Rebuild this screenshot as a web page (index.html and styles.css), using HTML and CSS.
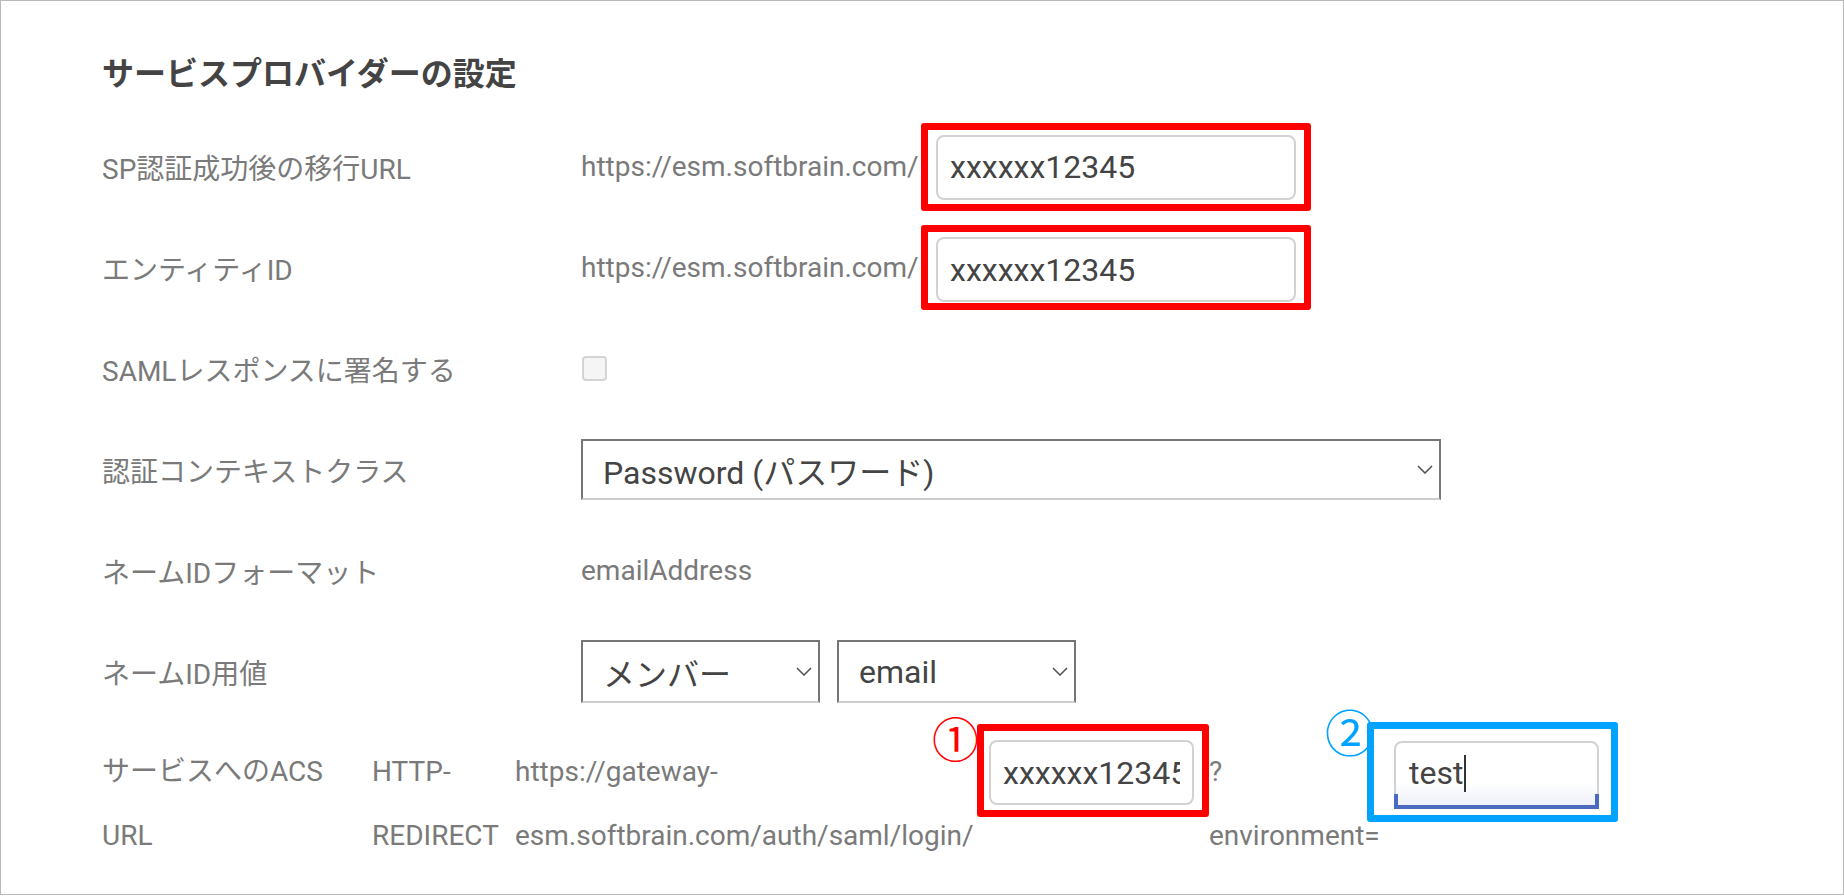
FILE: index.html
```html
<!DOCTYPE html>
<html lang="ja">
<head>
<meta charset="utf-8">
<title>サービスプロバイダーの設定</title>
<link rel="stylesheet" href="styles.css">
</head>
<body>
<div class="panel">
  <h2 class="title">サービスプロバイダーの設定</h2>

  <div class="row">
    <div class="label">SP認証成功後の移行URL</div>
    <div class="field">
      <span class="prefix">https://esm.softbrain.com/</span>
      <div class="mark mark-red mark-wide">
        <input class="text-input" type="text" value="xxxxxx12345" readonly>
      </div>
    </div>
  </div>

  <div class="row">
    <div class="label">エンティティID</div>
    <div class="field">
      <span class="prefix">https://esm.softbrain.com/</span>
      <div class="mark mark-red mark-wide mark-flat">
        <input class="text-input" type="text" value="xxxxxx12345" readonly>
      </div>
    </div>
  </div>

  <div class="row">
    <div class="label">SAMLレスポンスに署名する</div>
    <div class="field">
      <input class="check" type="checkbox">
    </div>
  </div>

  <div class="row">
    <div class="label">認証コンテキストクラス</div>
    <div class="field">
      <div class="select select-long">
        <span>Password (パスワード)</span>
        <svg class="chevron" width="16" height="9" viewBox="0 0 16 9"><polyline points="1,1 8,8 15,1" fill="none" stroke="#555" stroke-width="1.6"/></svg>
      </div>
    </div>
  </div>

  <div class="row">
    <div class="label">ネームIDフォーマット</div>
    <div class="field">
      <span class="value">emailAddress</span>
    </div>
  </div>

  <div class="row">
    <div class="label">ネームID用値</div>
    <div class="field field-gap">
      <div class="select select-short">
        <span>メンバー</span>
        <svg class="chevron" width="16" height="9" viewBox="0 0 16 9"><polyline points="1,1 8,8 15,1" fill="none" stroke="#555" stroke-width="1.6"/></svg>
      </div>
      <div class="select select-short">
        <span>email</span>
        <svg class="chevron" width="16" height="9" viewBox="0 0 16 9"><polyline points="1,1 8,8 15,1" fill="none" stroke="#555" stroke-width="1.6"/></svg>
      </div>
    </div>
  </div>

  <div class="acs">
    <div class="acs-col acs-label">サービスへのACS<br>URL</div>
    <div class="acs-col acs-method">HTTP-<br>REDIRECT</div>
    <div class="acs-col acs-url">https://gateway-<br>esm.softbrain.com/auth/saml/login/</div>
    <div class="mark mark-red mark-acs">
      <span class="badge badge-red">①</span>
      <input class="text-input" type="text" value="xxxxxx12345" readonly>
    </div>
    <div class="acs-col acs-query">?<br>environment=</div>
    <div class="mark mark-blue">
      <span class="badge badge-blue">②</span>
      <div class="text-input focused"><span>test</span><span class="caret"></span></div>
    </div>
  </div>
</div>
</body>
</html>
```

FILE: styles.css
```css
* {
  box-sizing: border-box;
}

html,
body {
  margin: 0;
  background: #fff;
}

body {
  font-family: Roboto, "Noto Sans CJK JP", sans-serif;
  color: #7a7a7a;
}

.panel {
  height: 895px;
  border: 1px solid #b9b9b9;
  padding: 51px 0 0 101px;
}

.title {
  margin: 0 0 20px;
  font-size: 32px;
  line-height: 44px;
  font-weight: 700;
  color: #444;
}

/* form rows */
.row {
  display: flex;
  align-items: center;
  height: 101px;
  font-size: 28px;
}

.label {
  width: 479px;
  flex: none;
}

.field {
  display: flex;
  align-items: center;
}

.field-gap {
  gap: 17px;
}

.prefix {
  width: 340px;
  white-space: nowrap;
}

.value {
  color: #7a7a7a;
}

/* annotation frames around inputs */
.mark {
  position: relative;
  flex: none;
  border-radius: 3px;
}

.mark-red {
  border: 7px solid #ff0000;
}

.mark-blue {
  border: 7px solid #00a3ff;
  width: 251px;
  height: 100px;
  padding: 12px 12px 6px 20px;
}

.mark-wide {
  width: 390px;
  height: 88px;
  padding: 5px 8px 4px 8px;
}

.mark-wide.mark-flat {
  height: 85px;
  padding-bottom: 1px;
}

.mark-acs {
  width: 232px;
  height: 93px;
  margin-top: 2px;
  padding: 9px 8px 4px 5px;
}

.badge {
  position: absolute;
  right: 100%;
  font-family: "Noto Sans CJK JP", sans-serif;
  font-size: 47px;
  line-height: 47px;
}

.badge-red {
  color: #ff0000;
  top: -18px;
  margin-right: 5px;
}

.badge-blue {
  color: #00a3ff;
  top: -24px;
  margin-right: -1px;
  font-size: 50px;
  line-height: 50px;
}

/* text inputs */
.text-input {
  display: block;
  width: 100%;
  height: 65px;
  margin: 0;
  border: 2px solid #d2d2d2;
  border-radius: 8px;
  padding: 0 12px 0 12px;
  font-family: Roboto, "Noto Sans CJK JP", sans-serif;
  font-size: 32px;
  color: #444;
  background: #fff;
  outline: none;
  overflow: hidden;
  white-space: nowrap;
}

.text-input.focused {
  position: relative;
  height: 68px;
  display: flex;
  align-items: center;
  padding-left: 13px;
  padding-bottom: 4px;
  overflow: visible;
  background: linear-gradient(to top, rgba(70, 100, 190, 0.10), rgba(70, 100, 190, 0) 24px);
}

.text-input.focused::after {
  content: "";
  position: absolute;
  left: -2px;
  right: -2px;
  bottom: -2px;
  height: 11px;
  border: 4px solid #4a6cc0;
  border-top: none;
}

.caret {
  display: inline-block;
  width: 2px;
  height: 37px;
  margin-left: 1px;
  background: #333;
}

/* checkbox */
.check {
  appearance: none;
  -webkit-appearance: none;
  width: 25px;
  height: 25px;
  margin: 0 0 0 1px;
  border: 2px solid #d4d4d4;
  border-radius: 4px;
  background: #f5f5f5;
}

/* select boxes */
.select {
  display: flex;
  align-items: center;
  justify-content: space-between;
  border: 2px solid #767676;
  border-bottom-color: #cdcdcd;
  padding: 0 6px 0 20px;
  font-size: 32px;
  color: #444;
  background: #fff;
}

.select-long {
  width: 860px;
  height: 61px;
}

.select-short {
  width: 239px;
  height: 63px;
}

.chevron {
  flex: none;
}

/* ACS URL row */
.acs {
  display: flex;
  align-items: flex-start;
  font-size: 28px;
}

.acs-col {
  flex: none;
  padding-top: 18px;
  line-height: 64px;
  white-space: nowrap;
}

.acs-label {
  width: 270px;
}

.acs-method {
  width: 143px;
}

.acs-url {
  width: 462px;
}

.acs-query {
  width: 158px;
}
```
